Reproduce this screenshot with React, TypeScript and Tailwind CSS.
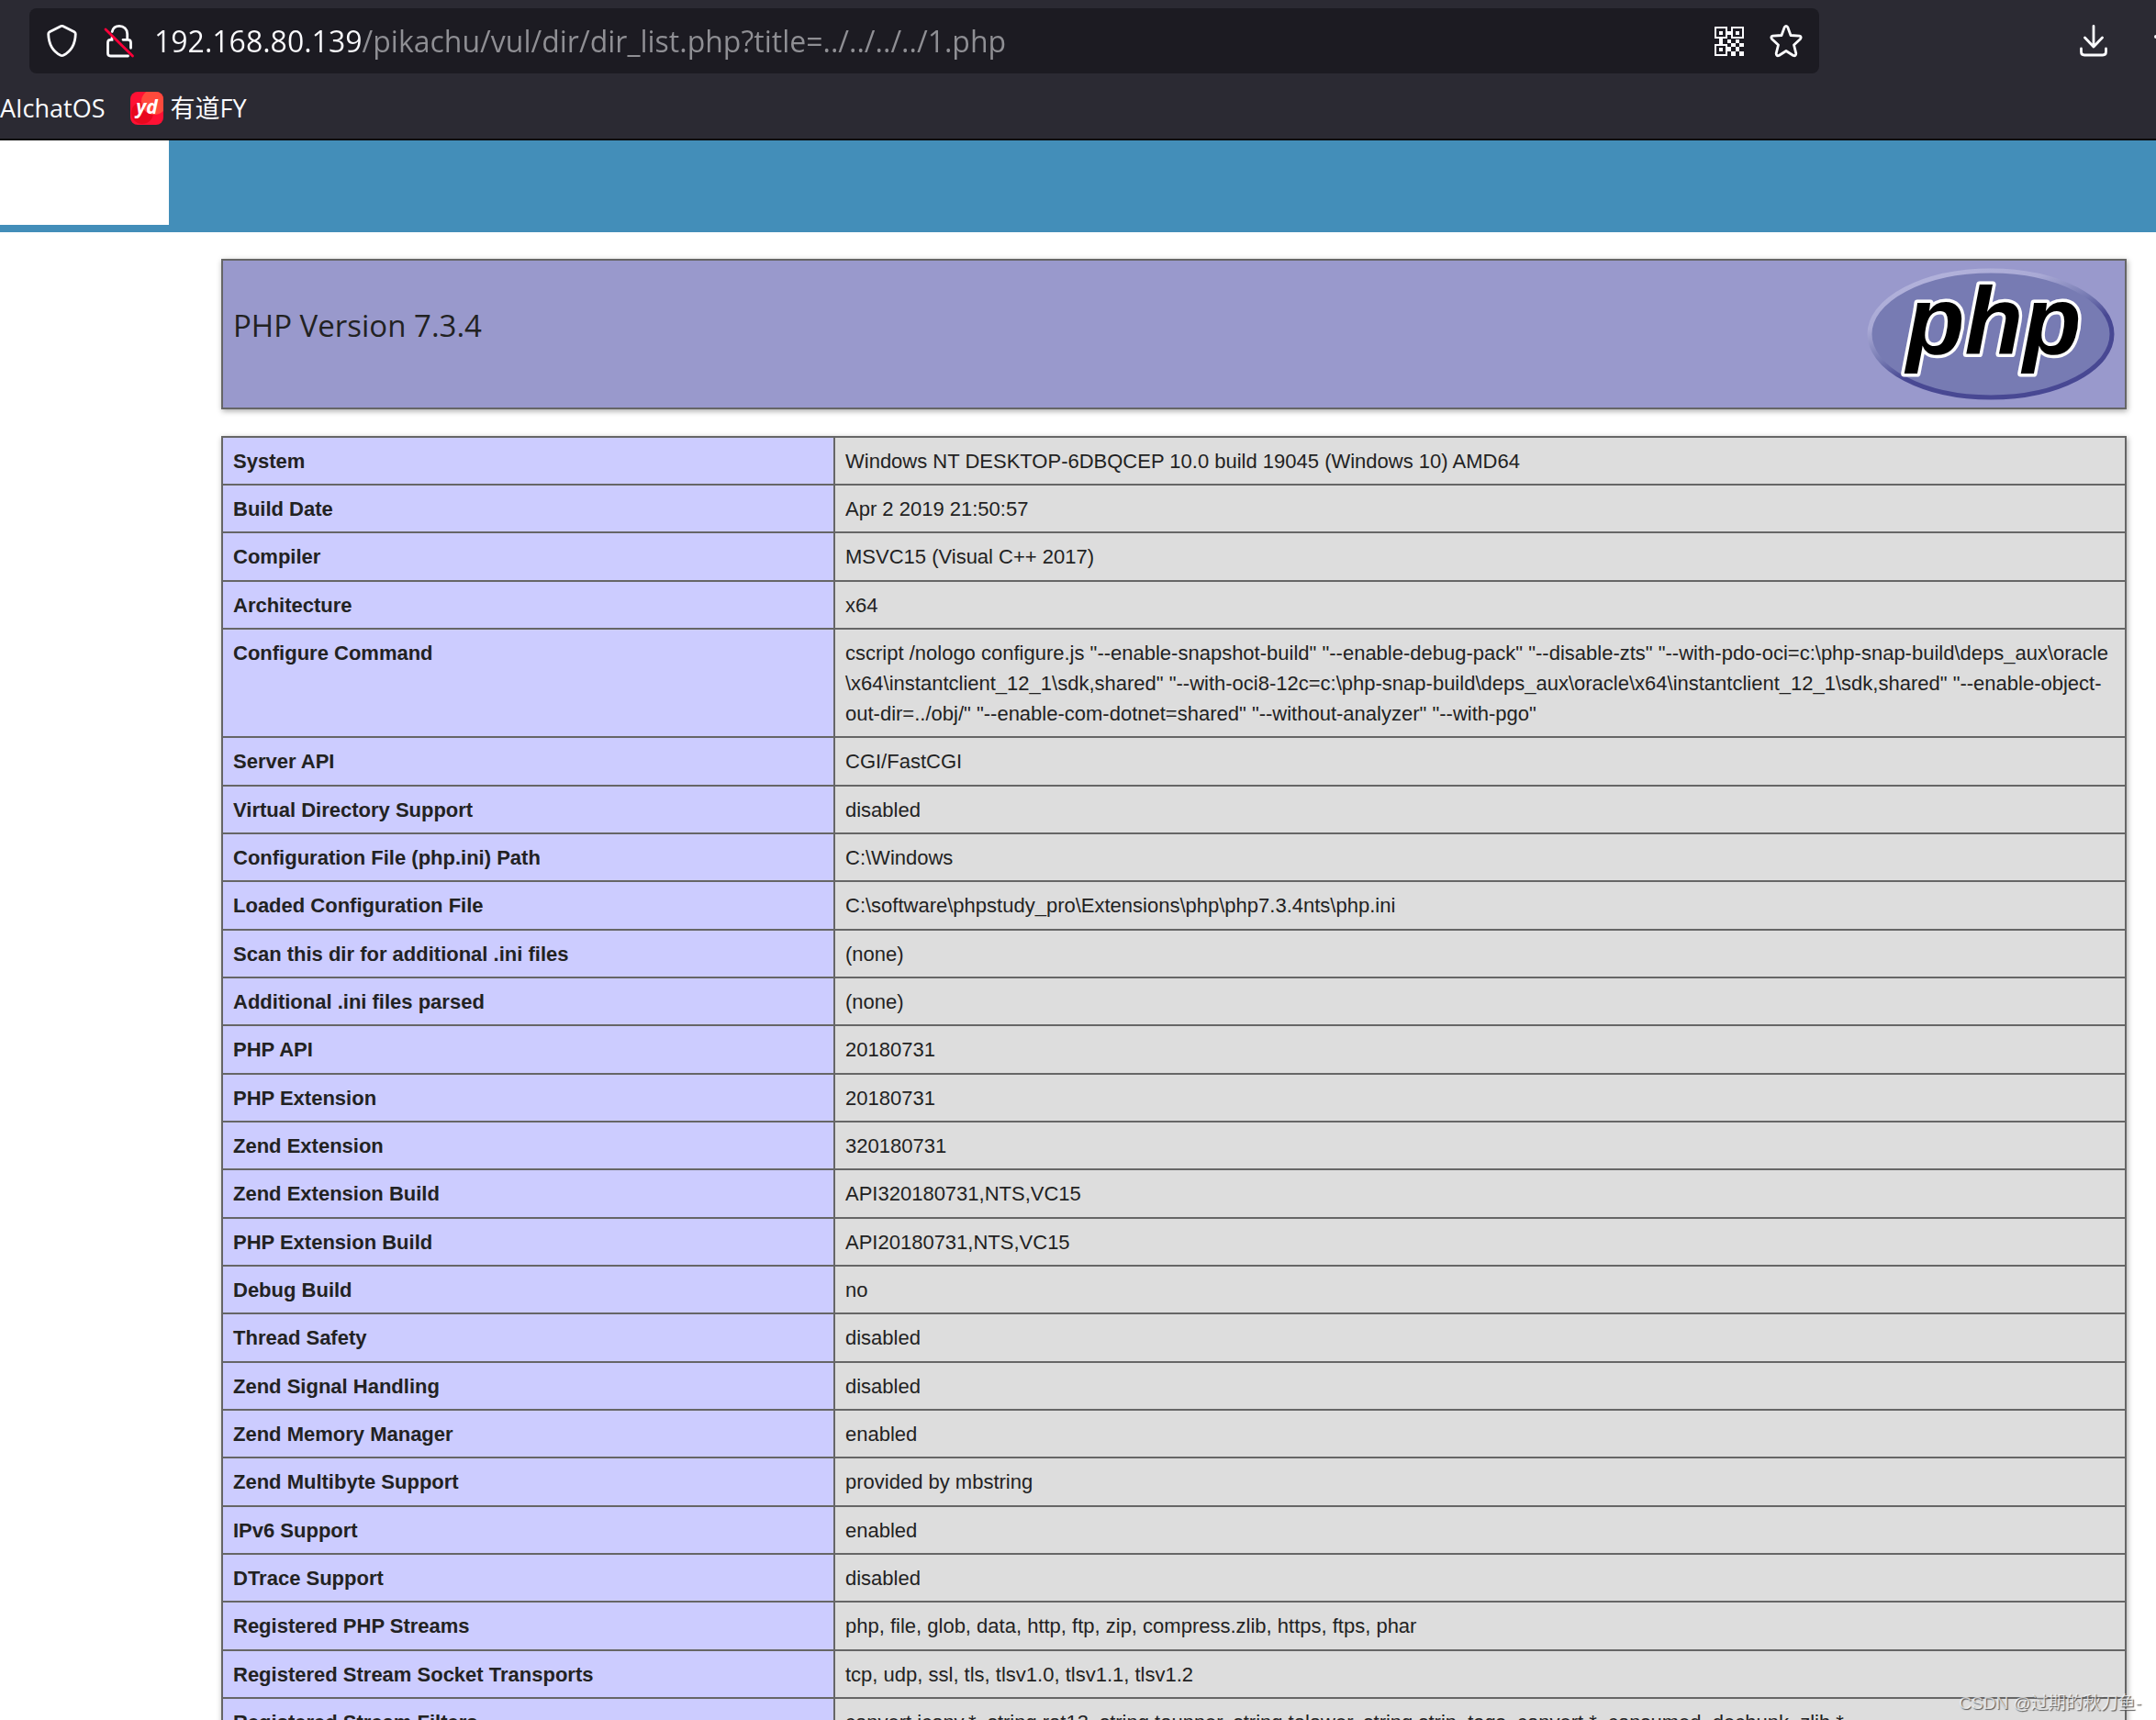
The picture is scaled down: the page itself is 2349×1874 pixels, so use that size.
import type { ReactNode } from 'react';

const rows: [string, string][] = [
    ['System', 'Windows NT DESKTOP-6DBQCEP 10.0 build 19045 (Windows 10) AMD64'],
    ['Build Date', 'Apr 2 2019 21:50:57'],
    ['Compiler', 'MSVC15 (Visual C++ 2017)'],
    ['Architecture', 'x64'],
    ['Configure Command', 'cscript /nologo configure.js "--enable-snapshot-build" "--enable-debug-pack" "--disable-zts" "--with-pdo-oci=c:\\php-snap-build\\deps_aux\\oracle\u200b\\x64\\instantclient_12_1\\sdk,shared" "--with-oci8-12c=c:\\php-snap-build\\deps_aux\\oracle\\x64\\instantclient_12_1\\sdk,shared" "--enable-object-out-dir=../obj/" "--enable-com-dotnet=shared" "--without-analyzer" "--with-pgo"'],
    ['Server API', 'CGI/FastCGI'],
    ['Virtual Directory Support', 'disabled'],
    ['Configuration File (php.ini) Path', 'C:\\Windows'],
    ['Loaded Configuration File', 'C:\\software\\phpstudy_pro\\Extensions\\php\\php7.3.4nts\\php.ini'],
    ['Scan this dir for additional .ini files', '(none)'],
    ['Additional .ini files parsed', '(none)'],
    ['PHP API', '20180731'],
    ['PHP Extension', '20180731'],
    ['Zend Extension', '320180731'],
    ['Zend Extension Build', 'API320180731,NTS,VC15'],
    ['PHP Extension Build', 'API20180731,NTS,VC15'],
    ['Debug Build', 'no'],
    ['Thread Safety', 'disabled'],
    ['Zend Signal Handling', 'disabled'],
    ['Zend Memory Manager', 'enabled'],
    ['Zend Multibyte Support', 'provided by mbstring'],
    ['IPv6 Support', 'enabled'],
    ['DTrace Support', 'disabled'],
    ['Registered PHP Streams', 'php, file, glob, data, http, ftp, zip, compress.zlib, https, ftps, phar'],
    ['Registered Stream Socket Transports', 'tcp, udp, ssl, tls, tlsv1.0, tlsv1.1, tlsv1.2'],
    ['Registered Stream Filters', 'convert.iconv.*, string.rot13, string.toupper, string.tolower, string.strip_tags, convert.*, consumed, dechunk, zlib.*'],
];

function IconButton({ label, children }: { label: string; children: ReactNode }) {
    return (
        <button type="button" aria-label={label} className="shrink-0 text-[#fbfbfe]">
            {children}
        </button>
    );
}

function ShieldIcon() {
    return (
        <svg width="36" height="36" viewBox="0 0 36 36" fill="none" stroke="currentColor" strokeWidth="2.8" strokeLinejoin="round">
            <path d="M16.400 1.500q1.100-.6 2.200 0L31 7.800q1.300.7 1.300 2.200C32 20 28.500 28.500 19 33.300q-1.500.7-3 0C6.500 28.500 3 20 2.700 10q0-1.500 1.300-2.200Z" />
        </svg>
    );
}

function InsecureIcon() {
    return (
        <svg width="36" height="36" viewBox="0 0 36 36" fill="none" stroke="currentColor" strokeWidth="2.8" strokeLinecap="round">
            <path d="M10.200 7.500C11 4 14 1.400 18 1.400c5 0 8.700 3.500 8.700 8.500V16M22 16.300h5.500q3 0 3 3v6M10 14v2.300H8.500q-3 0-3 3V31q0 3 3 3h19" />
            <path d="M3 5 32.500 34" stroke="#ff0039" />
        </svg>
    );
}

function QrIcon() {
    return (
        <svg width="32" height="32" viewBox="0 0 32 32" fill="currentColor">
            <path fillRule="evenodd" d="M0 0h14v13H0ZM2 2v9h10V2ZM18 0h14v13H18ZM20 2v9h10V2ZM0 19h14v13H0ZM2 21v9h10v-9Z" />
            <path d="M5 5h4v4H5ZM23 5h4v4h-4ZM5 23h4v4H5ZM14 5h4v4h-4ZM5 13h4v6H5ZM14 14h4v4h-4ZM23 14h4v4h-4ZM18 18h5v4h-5ZM27 18h5v4h-5ZM14 22h4v5h-4ZM23 22h4v5h-4ZM18 27h5v5h-5ZM27 27h5v5h-5Z" />
        </svg>
    );
}

function StarIcon() {
    return (
        <svg width="36" height="36" viewBox="0 0 36 36" fill="none" stroke="currentColor" strokeWidth="2.8" strokeLinejoin="round">
            <path d="M16.300 2.500q1.700-2.200 3.400 0L23 11.500l9.500.7q2.800.8 1 3.300L26.500 22l2.300 9.200q0 3.300-3 2.300L18 28.500l-7.800 5q-3 1-3-2.300L9.500 22l-7-6.500q-1.800-2.500 1-3.300l9.500-.7Z" />
        </svg>
    );
}

function DownloadIcon() {
    return (
        <svg width="36" height="36" viewBox="0 0 36 36" fill="none" stroke="currentColor" strokeWidth="2.8" strokeLinecap="round" strokeLinejoin="round">
            <path d="M18 1.500v22.500M8.500 14l9.500 10 9.500-10M4.500 26v3.500q0 3.500 3.500 3.500h20q3.500 0 3.500-3.500V26" />
        </svg>
    );
}

function YoudaoIcon() {
    return (
        <svg width="36" height="36" viewBox="0 0 36 36" aria-hidden="true">
            <defs>
                <clipPath id="tile"><rect width="36" height="36" rx="8" /></clipPath>
            </defs>
            <g clipPath="url(#tile)">
                <rect width="36" height="36" fill="#ff1134" />
                <circle cx="13" cy="23" r="12" fill="#e8081e" />
                <circle cx="26" cy="11" r="14" fill="#ff4a3c" />
            </g>
            <text x="18" y="24" textAnchor="middle" fontSize="21" fill="#fff" className="font-['Open_Sans',sans-serif] font-bold italic">yd</text>
        </svg>
    );
}

function PhpLogo() {
    return (
        <svg width="270" height="144" viewBox="0 0 270 144" role="img" aria-label="PHP logo">
            <defs>
                <linearGradient id="rim" x1="0.2" y1="0" x2="0.8" y2="1">
                    <stop offset="0" stopColor="#b4b4dc" />
                    <stop offset="0.250" stopColor="#a9a9d5" />
                    <stop offset="0.450" stopColor="#777bb3" />
                    <stop offset="0.600" stopColor="#484893" />
                    <stop offset="1" stopColor="#484893" />
                </linearGradient>
            </defs>
            <ellipse cx="135" cy="72" rx="132" ry="69" fill="#777bb3" stroke="url(#rim)" strokeWidth="5" />
            <text x="43" y="93" fontSize="104" fill="#000" stroke="#fff" strokeWidth="7" strokeLinejoin="round" paintOrder="stroke" className="font-['Liberation_Sans',sans-serif] font-bold italic">
                php
            </text>
        </svg>
    );
}

export default function App() {
    return (
        <div className="relative h-screen overflow-hidden bg-white font-['Liberation_Sans','Noto_Sans_CJK_SC',sans-serif] text-[#222]">
            <header className="border-b-2 border-[#0c0c0d] bg-[#2b2a33] pt-[9px] font-['Open_Sans','Noto_Sans_CJK_SC',sans-serif] text-[#fbfbfe]">
                <div className="flex items-center">
                    <div className="ml-8 flex h-[71px] w-[83%] items-center rounded-lg bg-[#1c1b22] pr-[18px] pl-[18px]">
                        <IconButton label="Tracking protection"><ShieldIcon /></IconButton>
                        <div className="ml-[26px] flex"><IconButton label="Connection not secure"><InsecureIcon /></IconButton></div>
                        <input
                            type="text"
                            aria-label="Address"
                            defaultValue="192.168.80.139/pikachu/vul/dir/dir_list.php?title=../../../../1.php"
                            className="ml-5 min-w-0 flex-1 bg-[linear-gradient(90deg,#fbfbfe_227px,#8f8f94_227px)] bg-clip-text text-[32px] text-transparent outline-none"
                        />
                        <div className="flex items-center gap-7">
                            <IconButton label="QR code"><QrIcon /></IconButton>
                            <IconButton label="Bookmark this page"><StarIcon /></IconButton>
                        </div>
                    </div>
                    <div className="ml-auto flex items-center justify-between gap-12">
                        <IconButton label="Downloads"><DownloadIcon /></IconButton>
                        <svg width="2" height="36" viewBox="0 0 2 36" fill="#fbfbfe" aria-hidden="true">
                            <circle cx="2" cy="13" r="2" />
                        </svg>
                    </div>
                </div>
                <nav className="flex h-[71px] items-center gap-[27px] pt-1 text-[27px] leading-9">
                    <a href="#aichatos">AIchatOS</a>
                    <a href="#youdao" className="flex items-center gap-2">
                        <YoudaoIcon />
                        有道FY
                    </a>
                </nav>
            </header>

            <div className="h-[100px] bg-[#438eb9]">
                <div className="h-[92px] w-[184px] bg-white" />
            </div>

            <main className="mt-[29px] mr-8 ml-[241px]">
                <div className="flex h-[164px] items-start justify-between border-2 border-[#666] bg-[#9999cc] px-[11px] py-2 shadow-[1px_2px_6px_#aaa]">
                    <h1 className="pt-[38px] font-['Open_Sans',sans-serif] text-[33px] leading-[50px]">PHP Version 7.3.4</h1>
                    <PhpLogo />
                </div>

                <table className="mt-[29px] w-full table-fixed border-collapse text-[22px] leading-[33px] shadow-[1px_2px_6px_#aaa]">
                    <tbody>
                        {rows.map(([name, value]) => (
                            <tr key={name} className="h-[52px] nth-[3n]:h-[53px]">
                                <th scope="row" className="w-[667px] border-2 border-[#666] bg-[#ccccff] px-[11px] pt-[9px] pb-2 text-left align-top font-bold">{name}</th>
                                <td className="border-2 border-[#666] bg-[#dddddd] px-[11px] pt-[9px] pb-2 align-top wrap-break-word">{value}</td>
                            </tr>
                        ))}
                    </tbody>
                </table>
            </main>

            <p className="absolute right-4 bottom-1 text-[19px] leading-7 text-white/70 [text-shadow:1px_1px_1px_#555]">CSDN @过期的秋刀鱼-</p>
        </div>
    );
}
